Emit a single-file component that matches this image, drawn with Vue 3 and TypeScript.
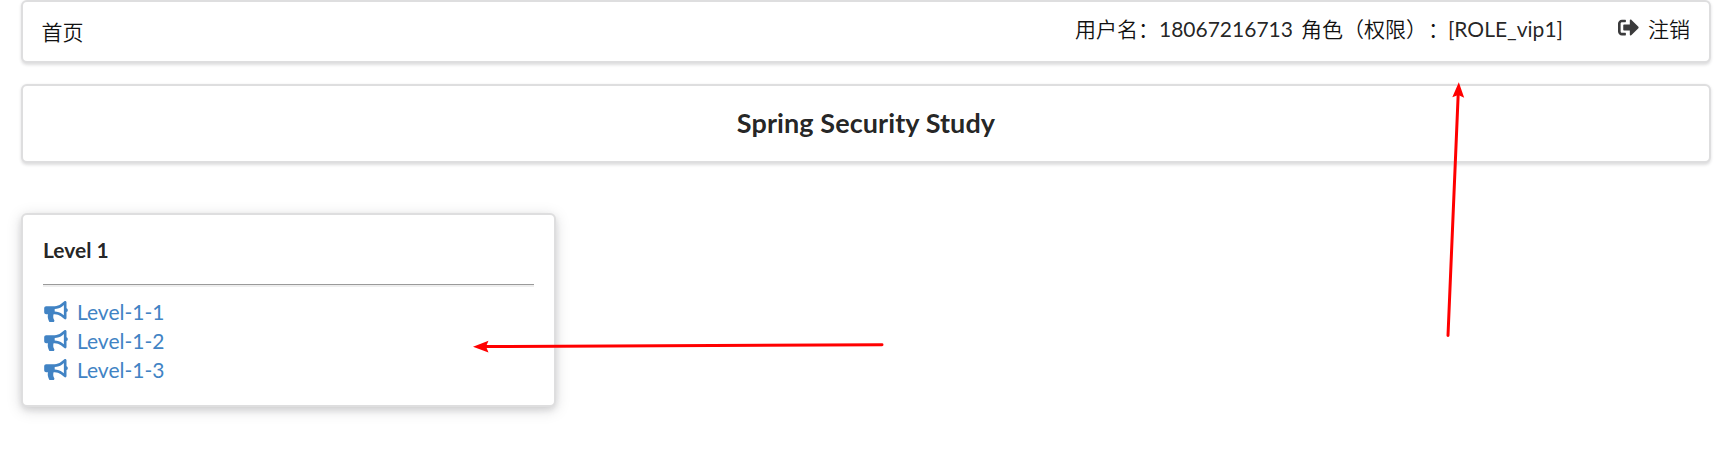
<script setup lang="ts">
const user = { name: '18067216713', roles: '[ROLE_vip1]' }
const links: string[] = ['Level-1-1', 'Level-1-2', 'Level-1-3']
</script>

<template>
  <div class="page">
    <nav class="segment nav">
      <a class="home cjk">首页</a>
      <div class="right">
        <span class="user"><span class="cjk">用户名：</span><span class="name">{{ user.name }}</span><span class="cjk">角色（权限）</span><span class="cjk colon">：</span><span>{{ user.roles }}</span></span>
        <a class="logout">
          <svg class="out-icon" viewBox="0 0 512 512">
            <path d="M497 273L329 441c-15 15-41 4.500-41-17v-96H152c-13.300 0-24-10.700-24-24v-96c0-13.300 10.700-24 24-24h136V88c0-21.400 25.900-32 41-17l168 168c9.300 9.400 9.300 24.600 0 34zM192 436v-40c0-6.600-5.400-12-12-12H96c-17.700 0-32-14.300-32-32V160c0-17.700 14.300-32 32-32h84c6.600 0 12-5.400 12-12V76c0-6.600-5.400-12-12-12H96c-53 0-96 43-96 96v192c0 53 43 96 96 96h84c6.600 0 12-5.400 12-12z" />
          </svg>
          <span class="cjk">注销</span>
        </a>
      </div>
    </nav>

    <header class="segment banner"><h3>Spring Security Study</h3></header>

    <section class="segment card">
      <h5>Level 1</h5>
      <hr />
      <a v-for="link in links" :key="link" class="link">
        <svg class="horn" viewBox="0 0 576 512">
          <path fill-rule="evenodd" d="M576 224c0-21-13-39-32-45V32c0-18-14-32-32-32-8 0-15 3-20 7l-85 68C364 109 311 128 256 128H48c-26 0-48 22-48 48v96c0 26 22 48 48 48h44c-15 65 2 120 28 178 5 9 14 14 24 14h74c26 0 42-30 26-51-25-33-30-90-15-141h27c55 0 108 19 151 53l85 68c6 5 13 7 20 7 18 0 32-14 32-32V269c19-6 32-24 32-45zM480 349l-33-26c-54-43-122-67-191-67v-64c69 0 137-24 191-67l33-26v250z" />
        </svg>
        <span>{{ link }}</span>
      </a>
    </section>

    <svg class="arrows" viewBox="0 0 1735 452">
      <path class="shaft" d="M882 344.800L484 346.600M1448 335.500L1458.200 94" />
      <path class="head" d="M473 346.700L488.500 340.700L486 346.600L488.500 352.500ZM1458.800 82.200L1464.200 97.700L1458.300 95L1452.300 97.200Z" />
    </svg>
  </div>
</template>

<style>
body {
  margin: 0;
  background: #fff;
  overflow: hidden;
}
</style>

<style scoped>
.page {
  position: relative;
  box-sizing: border-box;
  height: 452px;
  padding: 0 24px 0 21px;
  font-family: Lato, "Noto Sans CJK SC", sans-serif;
  font-size: 21px;
  line-height: 30px;
  color: rgba(0, 0, 0, 0.87);
}
.segment {
  box-sizing: border-box;
  border: 2px solid #dededf;
  border-radius: 6px;
  background: #fff;
  box-shadow: 0 1.5px 3px rgba(34, 36, 38, 0.15);
}
.nav {
  display: flex;
  justify-content: space-between;
  height: 63px;
  padding: 15px 19px 0 18.500px;
}
.cjk {
  margin-top: -1px;
  font-family: "Noto Sans CJK SC", sans-serif;
  font-weight: 350;
  color: #111;
  text-spacing-trim: space-all;
}
.colon {
  position: relative;
  left: 1px;
}
.right {
  display: flex;
  margin-top: -3px;
}
.user {
  display: flex;
  white-space: nowrap;
}
.name {
  margin-right: 8px;
}
.logout {
  display: flex;
  margin-left: 55px;
}
.out-icon {
  width: 21px;
  height: 21px;
  margin: 3px 9px 0 0;
  fill: #3b3b3c;
}
.banner {
  height: 79px;
  margin-top: 21px;
  padding-top: 20px;
  text-align: center;
}
h3,
h5 {
  margin: 0;
  font-weight: 700;
}
h3 {
  font-size: 27px;
  line-height: 34px;
  letter-spacing: 0.09px;
}
h5 {
  font-size: 21px;
  line-height: 27px;
}
.card {
  width: 535px;
  height: 194px;
  margin-top: 50px;
  padding: 21px 20px;
  box-shadow: 0 3px 6px rgba(34, 36, 38, 0.12), 0 3px 15px rgba(34, 36, 38, 0.15);
}
hr {
  height: 0;
  margin: 21px 0 10px;
  border: 0;
  border-top: 1px solid #9a9a9a;
  border-bottom: 2px solid #eee;
}
.link {
  display: flex;
  height: 29px;
  line-height: 29px;
  color: #4183c4;
}
.horn {
  width: 24px;
  height: 21px;
  margin: 4px 9.500px 0 0.500px;
  fill: #4183c4;
}
.arrows {
  position: absolute;
  inset: 0;
  width: 1735px;
  height: 452px;
  pointer-events: none;
}
.shaft {
  fill: none;
  stroke: #f00;
  stroke-width: 3;
  stroke-linecap: round;
}
.head {
  fill: #f00;
}
</style>
